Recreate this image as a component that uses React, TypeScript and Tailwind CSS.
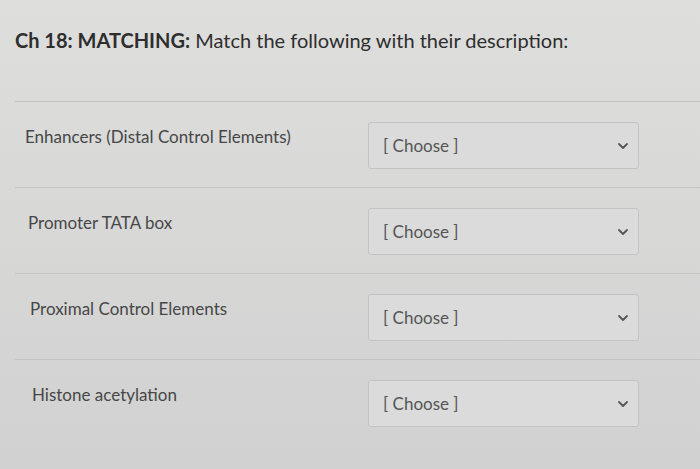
const items = [
  { label: "Enhancers (Distal Control Elements)", pad: "pl-[10px]" },
  { label: "Promoter TATA box", pad: "pl-[13px]" },
  { label: "Proximal Control Elements", pad: "pl-[15px]" },
  { label: "Histone acetylation", pad: "pl-[17px]" },
];

function Chevron() {
  return (
    <svg width="12" height="8" viewBox="0 0 12 8" fill="none" className="text-[#555]">
      <path d="M2 2l4 4 4-4" stroke="currentColor" strokeWidth="1.8" strokeLinecap="round" strokeLinejoin="round" />
    </svg>
  );
}

function MatchRow({ label, pad }: { label: string; pad: string }) {
  return (
    <div className="flex h-[86px] border-t border-[#c3c4c3]">
      <div className={`w-[353px] pt-[23px] text-[17px] leading-[24px] text-[#474747] ${pad}`}>
        {label}
      </div>
      <div className="pt-[20px]">
        <div className="flex h-[47px] w-[271px] items-center justify-between rounded-[3px] border border-[#c2c3c2] bg-[#dadbda] pl-[14px] pr-[9px]">
          <span className="text-[17px] text-[#555]">[ Choose ]</span>
          <Chevron />
        </div>
      </div>
    </div>
  );
}

export default function App() {
  return (
    <div
      className="flex h-[469px] w-[700px] flex-col overflow-hidden bg-gradient-to-b from-[#dededd] to-[#d0d1d0] pl-[15px]"
      style={{ fontFamily: "Lato, 'Open Sans', sans-serif" }}
    >
      <h1 className="pt-[26px] pb-[47px] text-[20px] leading-[28px] text-[#2e2e2e]">
        <span className="font-bold">Ch 18: MATCHING:</span> Match the following with their description:
      </h1>
      {items.map((it) => (
        <MatchRow key={it.label} label={it.label} pad={it.pad} />
      ))}
    </div>
  );
}
